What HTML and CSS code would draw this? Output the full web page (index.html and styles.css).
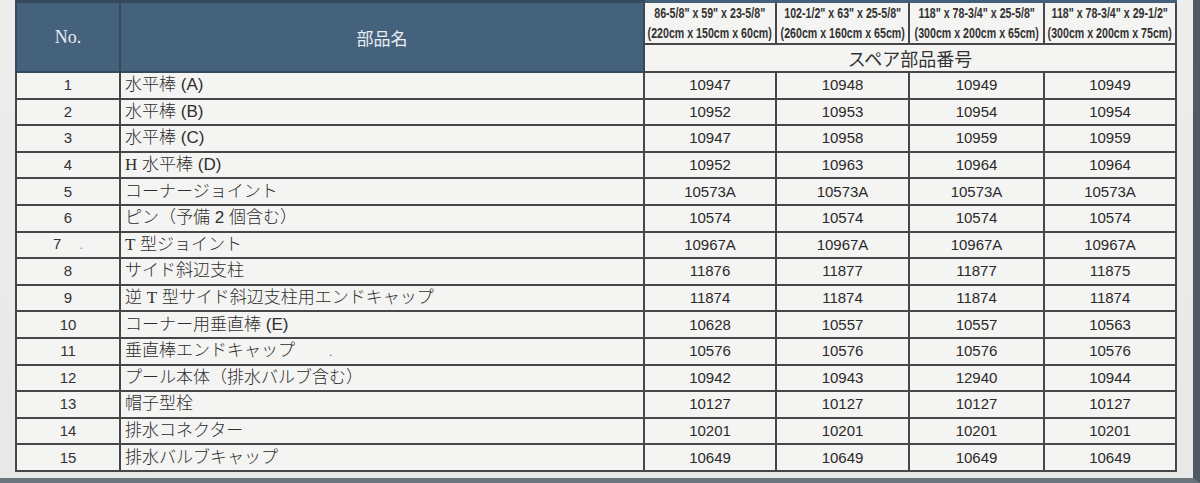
FILE: index.html
```html
<!DOCTYPE html>
<html lang="ja">
<head>
<meta charset="utf-8">
<title>スペア部品番号</title>
<link rel="stylesheet" href="styles.css">
</head>
<body>
<div class="page">
  <table class="parts">
    <colgroup>
      <col class="c-no"><col class="c-name"><col class="c-s1"><col class="c-s2"><col class="c-s3"><col class="c-s4">
    </colgroup>
    <thead>
      <tr class="h-size">
        <th rowspan="2" class="dark no-h">No.</th>
        <th rowspan="2" class="dark name-h">部品名</th>
        <th class="size"><span class="narrow">86-5/8" x 59" x 23-5/8"<br>(220cm x 150cm x 60cm)</span></th>
        <th class="size"><span class="narrow">102-1/2" x 63" x 25-5/8"<br>(260cm x 160cm x 65cm)</span></th>
        <th class="size"><span class="narrow">118" x 78-3/4" x 25-5/8"<br>(300cm x 200cm x 65cm)</span></th>
        <th class="size"><span class="narrow">118" x 78-3/4" x 29-1/2"<br>(300cm x 200cm x 75cm)</span></th>
      </tr>
      <tr class="h-spare">
        <th colspan="4" class="spare">スペア部品番号</th>
      </tr>
    </thead>
    <tbody>
      <tr><td class="no">1</td><td class="name">水平棒 (A)</td><td>10947</td><td>10948</td><td>10949</td><td>10949</td></tr>
      <tr><td class="no">2</td><td class="name">水平棒 (B)</td><td>10952</td><td>10953</td><td>10954</td><td>10954</td></tr>
      <tr><td class="no">3</td><td class="name">水平棒 (C)</td><td>10947</td><td>10958</td><td>10959</td><td>10959</td></tr>
      <tr><td class="no">4</td><td class="name"><span class="serif">H</span> 水平棒 (D)</td><td>10952</td><td>10963</td><td>10964</td><td>10964</td></tr>
      <tr><td class="no">5</td><td class="name">コーナージョイント</td><td>10573A</td><td>10573A</td><td>10573A</td><td>10573A</td></tr>
      <tr><td class="no">6</td><td class="name">ピン（予備 2 個含む）</td><td>10574</td><td>10574</td><td>10574</td><td>10574</td></tr>
      <tr><td class="no">7 <span class="dot">.</span></td><td class="name"><span class="serif">T</span> 型ジョイント</td><td>10967A</td><td>10967A</td><td>10967A</td><td>10967A</td></tr>
      <tr><td class="no">8</td><td class="name">サイド斜辺支柱</td><td>11876</td><td>11877</td><td>11877</td><td>11875</td></tr>
      <tr><td class="no">9</td><td class="name">逆 <span class="serif">T</span> 型サイド斜辺支柱用エンドキャップ</td><td>11874</td><td>11874</td><td>11874</td><td>11874</td></tr>
      <tr><td class="no">10</td><td class="name">コーナー用垂直棒 (E)</td><td>10628</td><td>10557</td><td>10557</td><td>10563</td></tr>
      <tr><td class="no">11</td><td class="name">垂直棒エンドキャップ<span class="dot2">.</span></td><td>10576</td><td>10576</td><td>10576</td><td>10576</td></tr>
      <tr><td class="no">12</td><td class="name">プール本体（排水バルブ含む）</td><td>10942</td><td>10943</td><td>12940</td><td>10944</td></tr>
      <tr><td class="no">13</td><td class="name">帽子型栓</td><td>10127</td><td>10127</td><td>10127</td><td>10127</td></tr>
      <tr><td class="no">14</td><td class="name">排水コネクター</td><td>10201</td><td>10201</td><td>10201</td><td>10201</td></tr>
      <tr><td class="no">15</td><td class="name">排水バルブキャップ</td><td>10649</td><td>10649</td><td>10649</td><td>10649</td></tr>
    </tbody>
  </table>
</div>
</body>
</html>
```

FILE: styles.css
```css
html, body {
  margin: 0;
  padding: 0;
  background: #ebebe9;
}
.page {
  width: 1200px;
  height: 483px;
  box-sizing: border-box;
  padding-left: 15px;
  background: linear-gradient(#ededeb, #e8e8e6);
  border-right: 7px solid #4f5a65;
  border-bottom: 5px solid #6b737b;
  overflow: hidden;
}
.parts {
  border-collapse: collapse;
  table-layout: fixed;
  width: 1160px;
  height: 471px;
  color: #2a2a2a;
  font-family: "Liberation Sans", "Noto Sans CJK JP", sans-serif;
  font-size: 15px;
  background: #f4f4f2;
}
.c-no { width: 104px; }
.c-name { width: 524px; }
.c-s1 { width: 132px; }
.c-s2 { width: 133px; }
.c-s3 { width: 135px; }
.c-s4 { width: 132px; }

.parts th, .parts td {
  border: 2px solid #474747;
  padding: 0;
}
.parts thead tr.h-size th {
  border-top: 3px solid #43607a;
}
.h-size { height: 42px; }
.h-spare { height: 26px; }
.parts tbody tr { height: 26.6px; }

.dark {
  background: #45627c;
  color: #e9eef2;
  font-weight: normal;
  border-color: #34495c !important;
}
.no-h {
  font-family: "Liberation Serif", serif;
  font-size: 18px;
}
.name-h {
  font-family: "Noto Sans CJK JP", sans-serif;
  font-size: 17px;
  font-weight: 400;
  padding-right: 6px;
  padding-bottom: 4px;
}
.size {
  background: #f4f4f2;
  color: #333;
  white-space: nowrap;
  overflow: hidden;
}
.narrow {
  display: inline-block;
  font-family: "Liberation Sans", sans-serif;
  font-weight: bold;
  font-size: 14px;
  line-height: 20px;
  transform: scaleX(0.76);
  transform-origin: center;
  margin: 0 -30px;
}
.spare {
  font-family: "Noto Sans CJK JP", sans-serif;
  font-weight: 400;
  font-size: 18px;
  color: #333;
  background: #f4f4f2;
}
.parts td {
  text-align: center;
  vertical-align: middle;
  line-height: 20px;
}
.parts td.no {
  color: #333;
}
.parts td.name {
  text-align: left;
  padding-left: 4px;
  font-size: 17px;
  font-weight: 300;
  color: #2e2e2e;
  white-space: nowrap;
}
.serif {
  font-family: "Liberation Serif", serif;
}
.dot {
  color: #888;
  font-size: 12px;
  margin-left: 14px;
}
.dot2 {
  color: #666;
  font-size: 12px;
  margin-left: 34px;
}
```
